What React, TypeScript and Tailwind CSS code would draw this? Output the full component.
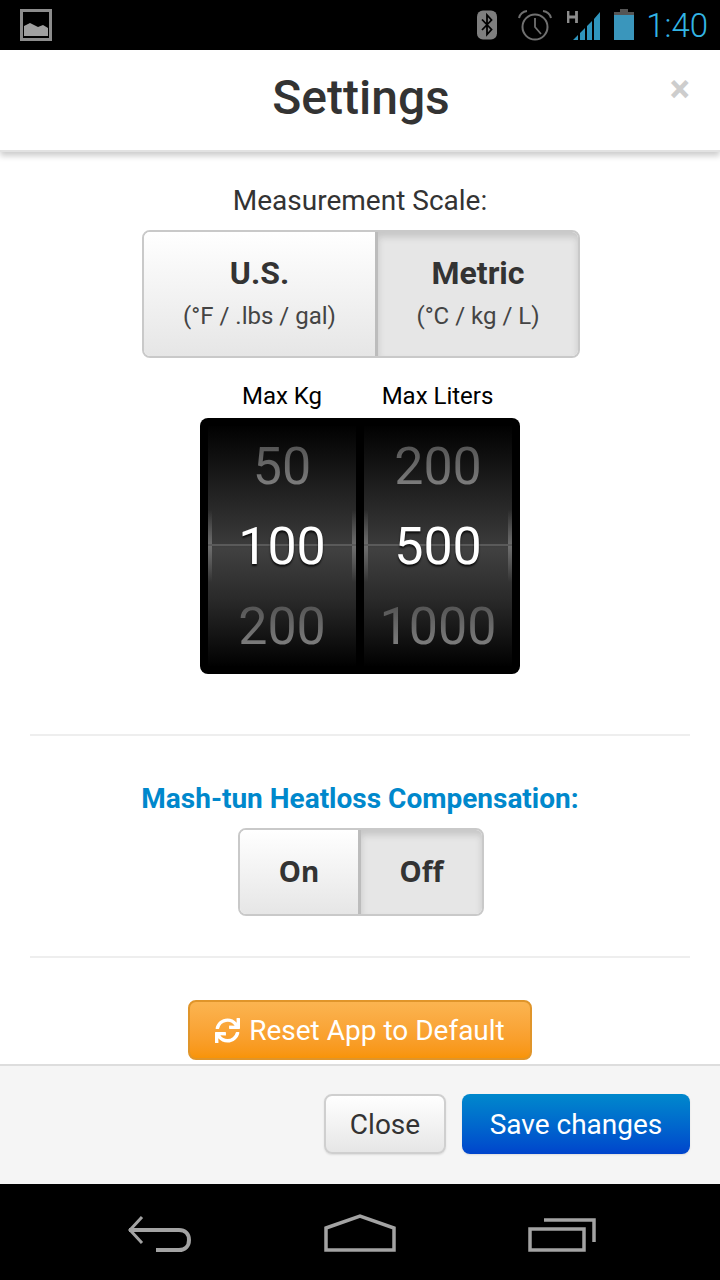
import { FaSync } from "react-icons/fa"

const segBase = "flex flex-col items-center justify-center text-[#333]"
const segIdle = "bg-gradient-to-b from-white to-[#e6e6e6] shadow-[inset_0_1px_0_#fff]"
const segActive = "bg-[#e6e6e6] shadow-[inset_0_5px_7px_rgba(0,0,0,0.14)]"

function Wheel({ items, width }: { items: string[]; width: string }) {
  return (
    <div className={`relative ${width} h-[240px] bg-[linear-gradient(#010101,#3a3a3a_49%,#414141_51%,#2a2a2a_72%,#010101)]`}>
      {/* edge highlights + fold line */}
      <div className="absolute left-0 top-[84px] h-[72px] w-1 bg-gradient-to-b from-transparent via-[#6e6e6e] to-transparent" />
      <div className="absolute right-0 top-[84px] h-[72px] w-1 bg-gradient-to-b from-transparent via-[#6e6e6e] to-transparent" />
      <div className="absolute left-0 right-0 top-[118px] h-[2px] bg-[#5a5a5a]" />
      <div className="relative flex flex-col">
        {items.map((n, i) => (
          <div key={n} className="h-[80px] pt-[2px] flex items-center justify-center text-[52px] leading-none">
            {i === 1 ? (
              <span className="text-white [text-shadow:0_2px_2px_rgba(0,0,0,0.8)]">{n}</span>
            ) : (
              <span className="text-transparent bg-clip-text bg-gradient-to-b from-[#505050] to-[#858585]">{n}</span>
            )}
          </div>
        ))}
      </div>
    </div>
  )
}

function StatusBar() {
  return (
    <div className="h-[50px] shrink-0 bg-black flex items-center justify-between pl-5 pr-3">
      <svg width="32" height="32" viewBox="0 0 32 32">
        <rect x="1.5" y="1.5" width="29" height="29" fill="none" stroke="#8c8c8c" strokeWidth="3" />
        <path d="M4 28v-10l6-3 4 2 4 2 5-2 5 3v8z" fill="#a0a0a0" transform="translate(0 -1)" />
      </svg>
      <div className="flex items-center">
        {/* bluetooth */}
        <svg width="20" height="30" viewBox="0 0 20 30" className="mr-[22px]">
          <rect width="20" height="29" y="0.5" rx="6" fill="#7e7e7e" />
          <path d="M5 9.5l9.5 10-4.5 5V5l4.5 5-9.5 10" fill="none" stroke="#000" strokeWidth="1.8" />
        </svg>
        {/* alarm */}
        <svg width="34" height="32" viewBox="0 0 34 32" className="mr-[15px] -ml-[1px]">
          <circle cx="17" cy="18" r="12.5" fill="none" stroke="#707070" strokeWidth="2" />
          <path d="M17 9v9l6 7" fill="none" stroke="#707070" strokeWidth="1.8" />
          <path d="M1 9c1-4 4-6.500 8-7M33 9c-1-4-4-6.500-8-7" fill="none" stroke="#707070" strokeWidth="2" />
        </svg>
        {/* H + signal */}
        <svg width="35" height="32" viewBox="0 0 35 32" className="mr-3">
          <path d="M1 2v12M9.500 2v12M1 8h8.500" fill="none" stroke="#8c8c8c" strokeWidth="2.800" />
          <path d="M6 31l5-5v5zM13 31V24l5-5v12zM20 31V17l5-5v19zM27 31V10l6-7v28z" fill="#2f95bd" />
        </svg>
        {/* battery */}
        <svg width="20" height="32" viewBox="0 0 20 32" className="mr-3">
          <rect x="6" y="0" width="8" height="3" fill="#555" />
          <rect x="0" y="3" width="20" height="3" fill="#555" />
          <rect x="0" y="6" width="20" height="25" fill="#3a96bc" />
        </svg>
        <span className="text-[33px] leading-none font-light text-[#33b5e5]">1:40</span>
      </div>
    </div>
  )
}

function NavBar() {
  return (
    <div className="h-[96px] shrink-0 bg-black flex items-start justify-center gap-[132px] pl-1 pt-[30px]">
      <svg width="64" height="40" viewBox="0 0 64 40" fill="none" stroke="#a3a3a3" strokeWidth="3">
        <path d="M14 3L2 16l12 13" />
        <path d="M1 16h50c6 0 10 4 10 10s-4 10-10 10H28" strokeWidth="4" />
      </svg>
      <svg width="72" height="40" viewBox="0 0 72 40" fill="none" stroke="#a3a3a3" strokeWidth="3.500">
        <path d="M2 14L36 2l34 12v22H2z" />
      </svg>
      <svg width="68" height="40" viewBox="0 0 68 40" fill="none" stroke="#a3a3a3" strokeWidth="3.500">
        <rect x="2" y="15" width="54" height="21" />
        <path d="M16 6h50v22" />
      </svg>
    </div>
  )
}

export default function App() {
  return (
    <div className="w-[720px] h-[1280px] flex flex-col bg-white overflow-hidden font-['Roboto',sans-serif]">
      <StatusBar />

      {/* Header */}
      <div className="relative z-10 h-[102px] shrink-0 bg-white border-b-2 border-[#e2e2e2] shadow-[0_4px_6px_rgba(0,0,0,0.2)] flex items-center justify-center">
        <h1 className="text-[48px] leading-none font-medium text-[#333] ml-[2px] mb-1">Settings</h1>
        <span className="absolute right-[30px] top-[20px] text-[38px] leading-none font-bold text-[#cdcdcd]">×</span>
      </div>

      {/* Body */}
      <div className="flex-1 min-h-0 flex flex-col items-center overflow-hidden">
        <div className="mt-[31px] h-[36px] flex items-center text-[28px] text-[#333]">Measurement Scale:</div>

        <div className="mt-[11px] ml-[2px] shrink-0 flex w-[438px] h-[128px] rounded-lg border-2 border-[#c9c9c9] overflow-hidden">
          <div className={`${segBase} ${segIdle} w-[231px] pb-[2px]`}>
            <span className="text-[32px] leading-[36px] font-bold -mt-[1px]">U.S.</span>
            <span className="mt-[10px] text-[24px] leading-[30px] text-[#444]">(°F / .lbs / gal)</span>
          </div>
          <div className="w-[3px] bg-[#bcbcbc]" />
          <div className={`${segBase} ${segActive} flex-1 pb-[2px]`}>
            <span className="text-[32px] leading-[36px] font-bold -mt-[1px]">Metric</span>
            <span className="mt-[10px] text-[24px] leading-[30px] text-[#444]">(°C / kg / L)</span>
          </div>
        </div>

        <div className="mt-[22px] w-[320px] flex justify-center h-[32px] items-center text-[24px] text-black">
          <span className="w-[164px] text-center">Max Kg</span>
          <span className="w-[156px] text-center pr-[9px]">Max Liters</span>
        </div>

        <div className="mt-[6px] w-[320px] h-[256px] bg-black rounded-lg p-2 flex gap-2">
          <Wheel items={["50", "100", "200"]} width="w-[148px]" />
          <Wheel items={["200", "500", "1000"]} width="w-[148px]" />
        </div>

        <div className="mt-[60px] w-[660px] h-[2px] bg-[#eeeeee]" />

        <div className="mt-[45px] h-[36px] flex items-center text-[28px] font-bold text-[#0088cc]">
          Mash-tun Heatloss Compensation:
        </div>

        <div className="mt-[11px] ml-[2px] flex w-[246px] h-[88px] rounded-lg border-2 border-[#c9c9c9] overflow-hidden font-['Noto_Sans',sans-serif]">
          <div className={`${segBase} ${segIdle} w-[118px] pb-[2px]`}>
            <span className="text-[28px] font-bold">On</span>
          </div>
          <div className="w-[3px] bg-[#bcbcbc]" />
          <div className={`${segBase} ${segActive} flex-1 pb-[2px]`}>
            <span className="text-[28px] font-bold">Off</span>
          </div>
        </div>

        <div className="mt-[40px] w-[660px] h-[2px] bg-[#eeeeee]" />

        <button className="mt-[42px] shrink-0 w-[344px] h-[60px] rounded-lg border-2 border-[#e0952a] bg-gradient-to-b from-[#fbb450] to-[#f89406] text-white text-[28px] flex items-center justify-center gap-[9px] pt-[1px]">
          <FaSync className="text-[25px]" />
          Reset App to Default
        </button>
      </div>

      {/* Footer */}
      <div className="h-[120px] shrink-0 bg-[#f5f5f5] border-t-2 border-[#dddddd] flex items-center justify-end gap-4 pr-[30px] pb-[2px]">
        <button className="w-[122px] h-[60px] rounded-lg border-2 border-[#cfcfcf] bg-gradient-to-b from-white to-[#e6e6e6] text-[28px] text-[#333] pt-[1px] shadow-[0_1px_2px_rgba(0,0,0,0.1)]">
          Close
        </button>
        <button className="w-[228px] h-[60px] rounded-lg bg-gradient-to-b from-[#0088cc] to-[#0044cc] text-[28px] text-white pt-[1px] shadow-[0_1px_2px_rgba(0,0,0,0.1)]">
          Save changes
        </button>
      </div>

      <NavBar />
    </div>
  )
}
